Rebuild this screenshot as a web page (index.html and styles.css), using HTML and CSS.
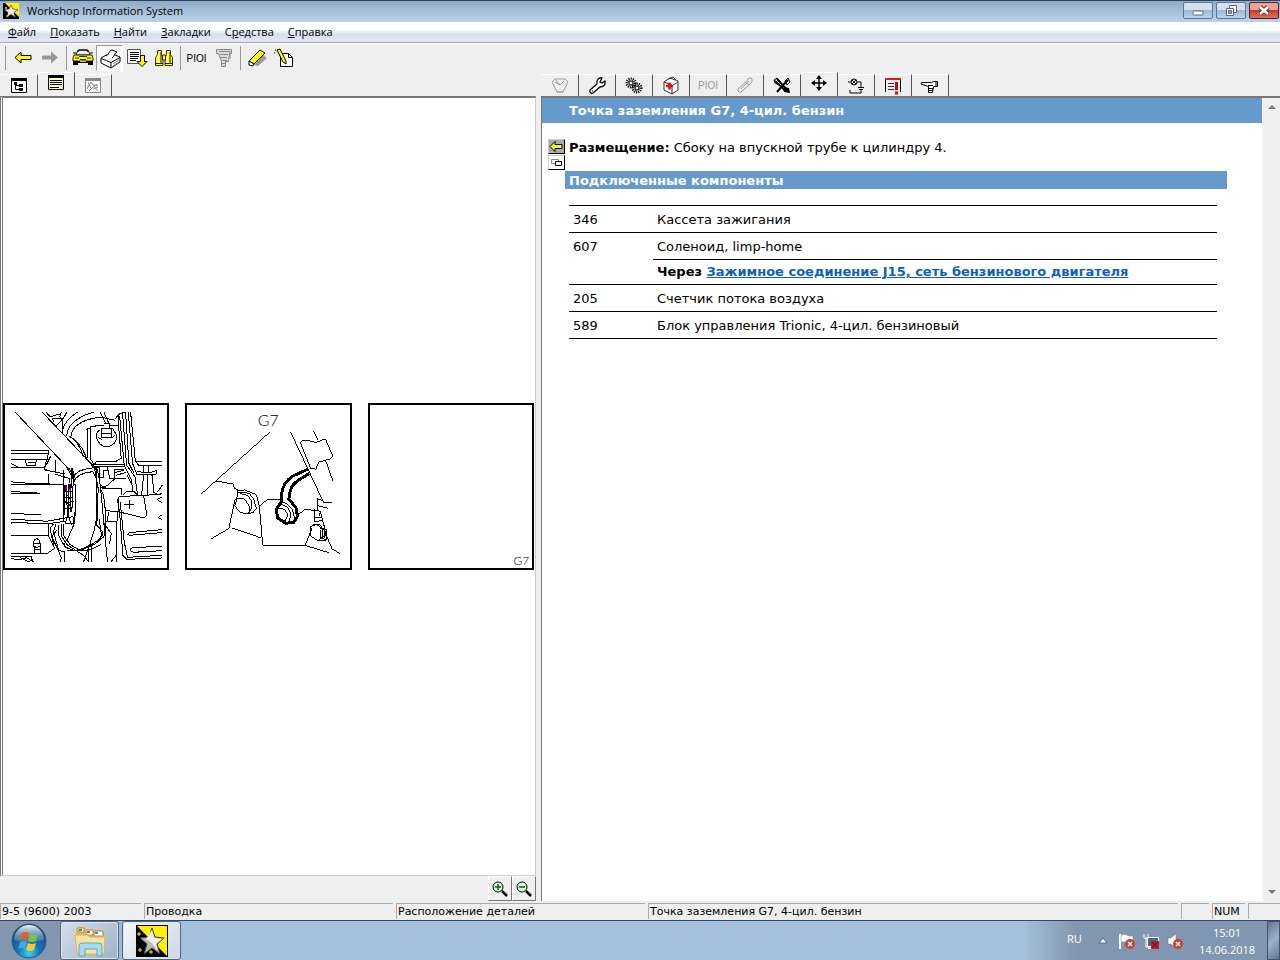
FILE: index.html
```html
<!DOCTYPE html>
<html lang="ru">
<head>
  <meta charset="UTF-8">
  <meta name="viewport" content="width=device-width, initial-scale=1.0">
  <title>Workshop Information System</title>
  <link rel="stylesheet" href="styles.css">
</head>
<body>
  <!-- Window title -->
  <header class="titlebar">
    <svg class="app-icon" viewBox="0 0 16 16"><path d="M0 0h16v16H0z"/><path d="M2 0h14v14z" fill="#fff200"/><path d="M8 2l2 4 5 .5-4 3 1.500 5-4.500-3-4.500 3 1.500-5-4-3 5-.5z" fill="#eee" stroke="#222" stroke-width=".6"/><path d="M2 5h2M3 4v2M3 13h2" stroke="#fff200"/></svg>
    <h1 class="window-title">Workshop Information System</h1>
    <div class="window-buttons">
      <button class="window-button" aria-label="Свернуть"><svg viewBox="0 0 28 15"><rect x="9" y="8" width="10" height="4" rx="1" fill="#fff" stroke="#56677d"/></svg></button>
      <button class="window-button" aria-label="Восстановить"><svg viewBox="0 0 28 15"><path d="M12.500 2.500h7v7h-7z" fill="#fff" stroke="#56677d"/><path d="M9.500 5.500h7v7h-7z" fill="#fff" stroke="#56677d"/><path d="M11.500 7.500h3v3h-3z" fill="#9db7d2" stroke="#56677d"/></svg></button>
      <button class="window-button close" aria-label="Закрыть"><svg viewBox="0 0 28 15"><path d="M10 4l8 7M18 4l-8 7" stroke="#5b3038" stroke-width="4.500"/><path d="M10 4l8 7M18 4l-8 7" stroke="#fff" stroke-width="2.600"/></svg></button>
    </div>
  </header>

  <!-- Menu -->
  <nav class="menubar">
    <button class="menu-item"><u>Ф</u>айл</button>
    <button class="menu-item"><u>П</u>оказать</button>
    <button class="menu-item"><u>Н</u>айти</button>
    <button class="menu-item"><u>З</u>акладки</button>
    <button class="menu-item">С<u>р</u>едства</button>
    <button class="menu-item"><u>С</u>правка</button>
  </nav>

  <!-- Toolbar -->
  <div class="toolbar">
    <button class="tool" aria-label="Назад"><svg viewBox="0 0 24 24"><path d="M4 11.500l6-5.500v3.500h10v4H10V17z" fill="#ff0" stroke="#000"/></svg></button>
    <button class="tool" aria-label="Вперёд"><svg viewBox="0 0 24 24"><path d="M20 11.500l-7-6v4H4v4h9v4z" fill="#999"/></svg></button>
    <span class="separator"></span>
    <button class="tool" aria-label="Автомобиль"><svg viewBox="0 0 24 24"><path d="M5 9l2-5h10l2 5z" fill="#efefef" stroke="#222"/><path d="M7 6l1-2h8l1 2M2 7h3M19 7h3" stroke="#000" fill="none"/><path d="M3 9h18l1 3v3H2v-3z" fill="#ff0" stroke="#222"/><path d="M2 15h20v4h-5v-2H7v2H2z"/><path d="M4 12h4M16 12h4M8 10.500h8M9 13.500h6" stroke="#222"/><path d="M9 15.500h6" stroke="#cc3"/></svg></button>
    <button class="tool pressed" aria-label="Печать"><svg viewBox="0 0 24 24"><path d="M3 12l9-5 10 4v5l-9 6-10-5z" fill="#fff" stroke="#000"/><path d="M3 12.500l10 4 9-5M13 16.500v5" fill="none" stroke="#000"/><path d="M8 10c3-1 3-6 6-6l5 2c-3 1-2 4-5 6" fill="#fff" stroke="#000"/><path d="M15 20l6-4M15 18l6-4M6 13l4 2" stroke="#888"/></svg></button>
    <button class="tool" aria-label="Список"><svg viewBox="0 0 24 24"><path d="M2.500 3.500h13v14h-13z" fill="#fff" stroke="#555"/><path d="M5 6.500h9M5 8.500h9M5 10.500h9M5 12.500h8M5 14.500h6" stroke="#000"/><path d="M15.500 9.500h4v6h2.500l-5 5-5-5h3.500z" fill="#ff0" stroke="#000"/></svg></button>
    <button class="tool" aria-label="Поиск"><svg viewBox="0 0 24 24"><path d="M5.500 4.500h4v4l1.500 3v8H3.500v-8l2-3zM14.500 4.500h4v4l2 3v8H13v-8l1.500-3z" fill="#ff0" stroke="#333"/><path d="M10.500 9h3v5h-3z" fill="#ff0" stroke="#222"/><path d="M3 17.500h8M13 17.500h8M9 6v12M18 6v12" stroke="#222"/><path d="M6.500 8v9M15.500 8v9" stroke="#fff"/></svg></button>
    <span class="separator"></span>
    <button class="tool code">PIOI</button>
    <button class="tool" aria-label="Разъём"><svg viewBox="0 0 24 24"><path d="M4.500 3.500h15v4h-2l-1 8h-3v5h-4v-5l-3-8h-2z" fill="#ddd" stroke="#888"/><path d="M7 5.500h11v7M8 8.500h8M8 11.500h7M9 14.500h6M10 17.500h4" fill="none" stroke="#888"/></svg></button>
    <span class="separator"></span>
    <button class="tool" aria-label="Руководство"><svg viewBox="0 0 24 24"><path d="M18 9l4 3-9 8-4-1z" fill="#999"/><path d="M4 15L15 4l5 3L9 18z" fill="#ff0" stroke="#000"/><path d="M4 15v4l4 1 1-2z" fill="#fff" stroke="#000"/></svg></button>
    <button class="tool" aria-label="Заметки"><svg viewBox="0 0 24 24"><path d="M8.500 7.500h8l4 4v9h-12z" fill="#fff" stroke="#000"/><path d="M16.500 7.500v4h4" fill="none" stroke="#000"/><path d="M5 4l3-1 6 12v3l-3-2z" fill="#ff0" stroke="#000"/><path d="M2 7h1M3 4h1" stroke="#000"/></svg></button>
  </div>

  <main class="workspace">
    <!-- Left pane: location drawings -->
    <section class="pane pane-left">
      <div class="tabs" role="tablist">
        <button class="tab" role="tab" aria-label="Дерево"><svg viewBox="0 0 24 24"><path d="M4.500 4.500h15v14h-15z" fill="#fff" stroke="#000"/><path d="M4 5.500h16" stroke="#000" stroke-width="3"/><path d="M7 8h3v3H7zM12 10h4v3h-4zM12 14h4v3h-4z"/><path d="M8.500 10v5.500H13M8.500 11.500H13" fill="none" stroke="#000"/></svg></button>
        <button class="tab active" role="tab" aria-selected="true" aria-label="Текст"><svg viewBox="0 0 24 24"><path d="M4.500 5.500h15v13h-15z" fill="#ffc" stroke="#000"/><path d="M4 5.500h16" stroke="#000" stroke-width="3"/><path d="M6 9.500h12M6 11.500h12M6 13.500h12M6 16.500h9" stroke="#000"/></svg></button>
        <button class="tab" role="tab" aria-label="Схема"><svg viewBox="0 0 24 24"><path d="M4.500 4.500h15v14h-15z" fill="#fff" stroke="#888"/><path d="M4 5.500h16" stroke="#888" stroke-width="3"/><path d="M6 15l2-4 2-3 3 4 4 5M8 17l3-3 5-4M13 11l4 1M12 15l5-2M7 8l3 6" fill="none" stroke="#888"/></svg></button>
      </div>

      <div class="figures">
        <figure class="figure">
          <svg viewBox="15 30 486 489" role="img" aria-label="Моторный отсек">
            <g class="thin">
              <path d="M45 51L198 213L216 245M126 51L275 208L288 225M138 51L150 66M158 72L162 82M150 66L178 57M155 69L190 72M183 52L179 64L187 78L186 115"/>
              <path d="M168 92L190 70L200 51M186 112Q190 78 232 51M200 122Q202 75 280 51M212 126Q215 78 300 66L345 76M205 122Q235 136 250 185M220 130L245 158L260 190"/>
              <path d="M300 51L316 85M311 51L326 85M310 85H328V98M272 94L310 91M328 90L355 92L363 190L348 198H290L282 208L270 190L272 94M272 100H263V188M263 104H259"/>
              <path d="M300 104Q286 112 289 130Q300 156 322 155Q350 150 349 120L337 100H305V126H334V103M305 115H334M294 128L305 133M334 130L344 120"/>
              <path d="M276 208H372M280 214H370M290 216V250M299 218V246H311V226H321M321 216L329 250H343V224H370M343 232L370 226M348 240L378 232"/>
              <path d="M345 72L355 58L374 51M355 58V90M358 62L372 210L392 250L398 288M367 54L379 210L404 245L412 300M376 51L386 205L400 232M384 51L397 205L410 238H468M391 51L405 195L415 211H486M405 199H486M430 211V233M446 211V233M410 229L430 232L450 233L468 226V238"/>
              <path d="M430 240L424 300M443 240L441 300M455 240L461 292L476 300M380 240L398 276M367 300L380 288H400L412 300M472 290L486 270"/>
              <path d="M33 167H144V180M33 175H144M33 192H144M144 180L132 222M152 183L132 222L158 230M33 205L55 217M33 217H132M75 194L80 210L105 212L110 194M84 202H105M165 196V233M132 224L193 236M144 236V265M163 236L207 250V265M33 260L80 264L190 268M33 268H190V376"/>
              <path d="M33 289L120 294M33 294H120M33 355L122 358M33 372L140 378L220 364M33 381L140 386L195 378M33 421H145V386M33 380V385"/>
              <path d="M198 213L214 230V268M205 218L220 240V266L226 270M190 226V266M216 250Q232 220 275 220M220 262Q232 232 278 230M226 268V350L222 386L205 425L191 450M278 230L288 250L289 370L282 405L268 450L250 500"/>
              <path d="M283 218L294 280L290 390L308 410L300 430Q250 470 200 466M292 224L300 270L308 350L315 430L322 500M300 280L310 300L316 350V430M297 370L302 410L310 425L285 446L240 466L210 448L190 420V385M183 385V420L200 448L250 480L266 500M175 388V420L194 454Q240 482 303 448M266 450V500M274 450V500"/>
              <path d="M193 270V360M198 270L202 360M206 268V358M213 265L211 350M219 264L215 350M194 290H218M194 306H215M195 323L222 318M195 341H212M205 350L196 385L220 386L223 350M202 354L214 390M198 295L212 316M196 318L210 331"/>
              <path d="M160 386L150 400L163 460L140 475H33M168 385L160 410L176 465L194 470V500M170 405L155 425L170 455L184 488L180 500M145 421L158 448M33 483H93L98 500M33 490L60 493L80 487L100 500M60 487L88 500M110 430Q98 434 100 452L110 457L120 452Q122 434 110 430M100 444H120M104 456V474M120 453V474M102 462H120M104 474H120"/>
              <path d="M304 280H365V300M300 280L322 270L345 250L377 250M299 270L320 280M318 346L352 350V376M326 352L320 378H350M350 376V500M348 480L332 500M310 382L333 415L328 446"/>
              <path d="M356 304L440 300L486 296M351 311L358 350L368 480L380 492L486 488M360 320L372 440L382 486L486 480M356 304V350L430 368L440 360L430 302M486 306Q460 312 486 322M486 360Q465 366 486 373M486 403L390 412Q374 418 390 420L486 412M486 454L400 456Q380 464 400 471L486 466"/>
              <path d="M370 328H402M387 315V342"/>
            </g>
            <path class="bold" d="M198 270V286M211 266V282M215 218L221 248M275 208L292 225M275 215H298"/>
            <path d="M198 271V289M210 278V288" stroke="#806" stroke-width="4"/>
          </svg>
        </figure>

        <figure class="figure">
          <svg viewBox="21 30 489 489" role="img" aria-label="Точка заземления G7">
            <text class="drawing-label" x="234" y="93">G7</text>
            <g class="thin">
              <path d="M270 112L63 299M108 259L160 268L164 280L174 286V304L165 318L147 402L94 433M156 400L243 430M174 287L195 286L230 300M174 292L208 296L222 314L230 342L220 354L200 358M181 297L203 302L216 320L214 344L204 357M230 300L239 334L249 452L377 453L398 400M239 334L262 316H300M333 111L433 325H458M427 317L413 312V350M413 333L446 341"/>
              <path d="M172 313H194L210 336V352L200 358L180 352L165 334Z"/>
              <path d="M365 150Q358 138 378 136L408 143L438 132L460 184L450 193L418 202L409 223L394 222Z" fill="#fff"/>
              <path d="M403 109L414 134M438 196L461 260M357 360L376 344L423 350L440 422L458 463L483 479M377 453L449 475M404 342V380M423 350L420 365M404 368L428 370M404 380L430 379L438 408M400 390H423L435 406V430"/>
              <path d="M301 321L320 326L338 344L345 370M302 327L326 339L334 360L328 382M296 340L315 344L325 361L318 378L300 374L292 358Z"/>
              <path d="M394 396L410 390L430 402V430L415 438L394 426ZM422 402L440 404V438L415 438M423 407V430L440 436M424 431L440 422"/>
            </g>
            <path class="cable" d="M384 224L340 244Q309 265 306 298V321L290 344L294 370L318 386L342 384L354 365L349 339L328 313Q330 274 352 260L389 236"/>
          </svg>
        </figure>

        <figure class="figure">
          <svg viewBox="30 30 489 489" role="img" aria-label="G7">
            <text class="drawing-label small" x="462" y="511">G7</text>
          </svg>
        </figure>
      </div>

      <div class="zoom-bar">
        <button class="zoom-button" aria-label="Увеличить"><svg viewBox="0 0 20 20"><circle cx="8" cy="8" r="5" fill="#dfd" stroke="#000"/><path d="M5 8h6M8 5v6" stroke="#060" stroke-width="1.500"/><path d="M12 12l5 5" stroke="#000" stroke-width="2.500"/></svg></button>
        <button class="zoom-button" aria-label="Уменьшить"><svg viewBox="0 0 20 20"><circle cx="8" cy="8" r="5" fill="#dfd" stroke="#000"/><path d="M5 8h6" stroke="#060" stroke-width="1.500"/><path d="M12 12l5 5" stroke="#000" stroke-width="2.500"/></svg></button>
      </div>
    </section>

    <!-- Right pane: description -->
    <section class="pane pane-right">
      <div class="tabs" role="tablist">
        <button class="tab" role="tab" aria-label="Технические данные"><svg viewBox="0 0 24 24"><path d="M7 5h10l3 3-5 10H9L4 8zM7 8l5 3 4-4M8 6l4 5M9 18h6" fill="none" stroke="#999"/></svg></button>
        <button class="tab" role="tab" aria-label="Ремонт"><svg viewBox="0 0 24 24"><path d="M5 16l7-6c-1-4 2-7 5-6l-2 4 2 1 3-2c1 4-2 6-5 6l-7 6c-2 1-4-1-3-3z" fill="#fff" stroke="#000" stroke-width="1.300"/><path d="M7 17h1" stroke="#000"/></svg></button>
        <button class="tab" role="tab" aria-label="Узлы"><svg viewBox="0 0 24 24"><circle cx="9" cy="9" r="4" fill="none" stroke="#000" stroke-width="3" stroke-dasharray="1 1"/><circle cx="15" cy="14" r="4" fill="none" stroke="#000" stroke-width="3" stroke-dasharray="1 1"/><circle cx="9" cy="9" r="2" fill="none" stroke="#000"/><circle cx="15" cy="14" r="2" fill="none" stroke="#000"/></svg></button>
        <button class="tab" role="tab" aria-label="Диагностика"><svg viewBox="0 0 24 24"><path d="M5 8l6-4 8 3v9l-6 4-8-4zM14 11l5-3M13 20v-9L5 8M9 5l5-2 3 3" fill="#fff" stroke="#333"/><path d="M7 12h7M10.500 8.500v7" stroke="#d11" stroke-width="2.500"/></svg></button>
        <button class="tab code muted" role="tab">PIOI</button>
        <button class="tab" role="tab" aria-label="Измерения"><svg viewBox="0 0 24 24"><path d="M5 15l8-7 3-4q2-1 3 1t-2 5l-9 8q-2 1-3-1zM8 15l8-8M12 8l4 3" fill="#eee" stroke="#999"/></svg></button>
        <button class="tab" role="tab" aria-label="Инструменты"><svg viewBox="0 0 24 24"><path d="M6 6l10 10" stroke="#000" stroke-width="4"/><path d="M6 6l10 10" stroke="#fff"/><path d="M18 6l-5 5-6 7" stroke="#000" stroke-width="2" fill="none"/><path d="M13 13l6 1 1 5-6-1z"/><path d="M4 6l3-2 4 4-2 3-4-2zM15 7l3-3 2 4-3 3z" fill="none" stroke="#000"/></svg></button>
        <button class="tab active" role="tab" aria-selected="true" aria-label="Расположение"><svg viewBox="0 0 24 24"><path d="M12 6v12M6 12h12" stroke="#000" stroke-width="1.500"/><path d="M12 4l3 4H9zM12 20l3-4H9zM4 12l4-3v6zM20 12l-4-3v6z"/></svg></button>
        <button class="tab" role="tab" aria-label="Электросхема"><svg viewBox="0 0 24 24"><circle cx="10" cy="8" r="3" fill="none" stroke="#000"/><path d="M8 6l4 4M12 6l-4 4M4 8h3M13 8h4v5M14 13.500h6M15 15.500h4M17 16v3H6v-3" fill="none" stroke="#000"/></svg></button>
        <button class="tab" role="tab" aria-label="Бюллетени"><svg viewBox="0 0 24 24"><path d="M4.500 18V5.500h15V18" fill="none" stroke="#000"/><path d="M4 5h16" stroke="#c22" stroke-width="2"/><path d="M7 9.500h6M7 12.500h6M7 15.500h6" stroke="#333"/><path d="M15.500 8v8M15.500 17.500v3" stroke="#d00" stroke-width="3"/></svg></button>
        <button class="tab" role="tab" aria-label="Указатель"><svg viewBox="0 0 24 24"><path d="M3.500 8.500h10l2-1h4v5h-4l-1 6h-4v-6L3 10z" fill="#fff" stroke="#000"/><path d="M10 11.500h5M11 14.500h4M11 16.500h4M18 8v4" stroke="#000"/></svg></button>
      </div>

      <div class="document-frame">
        <article class="document">
          <h2 class="document-title">Точка заземления G7, 4-цил. бензин</h2>
          <div class="location">
            <div class="location-buttons">
              <button class="mini-button back" aria-label="Назад к рисунку"><svg viewBox="0 0 15 13"><path d="M1 6.500L6 1.500v3h7v4H6v3z" fill="#ff0" stroke="#000"/></svg></button>
              <button class="mini-button" aria-label="Показать рисунок"><svg viewBox="0 0 15 13"><path d="M2.500 3.500h7v4h-7z" fill="#fff" stroke="#888"/><path d="M6.500 5.500h6v4h-6z" fill="#fff" stroke="#000"/></svg></button>
            </div>
            <p class="location-text"><b>Размещение:</b> Сбоку на впускной трубе к цилиндру 4.</p>
          </div>
          <h3 class="section-title">Подключенные компоненты</h3>
          <table class="components">
            <tr><td class="number">346</td><td>Кассета зажигания</td></tr>
            <tr><td class="number" rowspan="2">607</td><td>Соленоид, limp-home</td></tr>
            <tr class="via"><td><b>Через <a href="#j15">Зажимное соединение J15, сеть бензинового двигателя</a></b></td></tr>
            <tr><td class="number">205</td><td>Счетчик потока воздуха</td></tr>
            <tr><td class="number">589</td><td>Блок управления Trionic, 4-цил. бензиновый</td></tr>
          </table>
        </article>
        <div class="scrollbar">
          <button class="scroll-arrow up" aria-label="Вверх"></button>
          <button class="scroll-arrow down" aria-label="Вниз"></button>
        </div>
      </div>
    </section>
  </main>

  <!-- Status bar -->
  <div class="statusbar">
    <span class="status">9-5 (9600) 2003</span>
    <span class="status">Проводка</span>
    <span class="status">Расположение деталей</span>
    <span class="status">Точка заземления G7, 4-цил. бензин</span>
    <span class="status"></span>
    <span class="status">NUM</span>
    <span class="status"></span>
  </div>

  <!-- Windows taskbar -->
  <footer class="taskbar">
    <button class="start" aria-label="Пуск">
      <svg viewBox="0 0 36 36">
        <defs>
          <radialGradient id="orb" cx="50%" cy="85%" r="80%"><stop offset="0" stop-color="#35d5f5"/><stop offset=".4" stop-color="#1674b5"/><stop offset="1" stop-color="#164576"/></radialGradient>
          <linearGradient id="shine" x2="0" y2="1"><stop offset="0" stop-color="#e8f1f7"/><stop offset="1" stop-color="#7aa6c8" stop-opacity=".3"/></linearGradient>
        </defs>
        <circle cx="18" cy="18" r="17" fill="url(#orb)" stroke="#355574"/>
        <path d="M3 17a15 15 0 0 1 30 0q-15 4-30 0z" fill="url(#shine)"/>
        <path d="M11 10q4-2 7 0l-2 7q-4-2-7 0z" fill="#ee5a24"/>
        <path d="M19 11q4 2 8 0l-2 7q-4 2-8 0z" fill="#7fc23c"/>
        <path d="M9 19q4-2 7 0l-2 7q-4-2-7 0z" fill="#45a5e8"/>
        <path d="M17 20q4 2 8 0l-2 7q-4 2-8 0z" fill="#fdc82e"/>
      </svg>
    </button>
    <button class="task" aria-label="Проводник">
      <svg viewBox="0 0 34 34"><path d="M3 5q0-2 2-2h7l2 3h17v23q0 2-2 2H5q-2 0-2-2z" fill="#e3ba62"/><path d="M5 4h6v4H5zM13 6h7v5h-7zM21 7h9v5h-9z" fill="#fff" stroke="#b38c45"/><path d="M6 5h3v2H6z" fill="#2a9c49"/><path d="M14 7h3v2h-3z" fill="#d34b35"/><path d="M22 8h3v2h-3z" fill="#378bd0"/><path d="M2 11h12l3 2h15l-1 17H4z" fill="#f9e3a0" stroke="#dab362"/><path d="M6 32V22q0-3 3-3h17q3 0 3 3v10h-5v-7H12v7z" fill="#a5dcef" stroke="#5ba8c9"/></svg>
    </button>
    <button class="task current" aria-label="Workshop Information System">
      <svg viewBox="0 0 34 34"><path d="M1 1h32v32H1z"/><path d="M2 2h30v30z" fill="#fff200"/><path d="M17 4l3 9 9 1-7 6 3 10-8-6-8 6 3-10-7-6 9-1z" fill="#bbb" stroke="#444"/><path d="M17 6l2 8 8 1-6 5 2 7-6-8-6-4z" fill="#f0f0f0"/><path d="M2 10h4M4 8v4M3 26h4M5 24v4M14 28h4M16 26v4" stroke="#fff200"/></svg>
    </button>
    <div class="tray">
      <span class="language">RU</span>
      <button class="tray-button" aria-label="Скрытые значки"><svg viewBox="0 0 18 18"><path d="M5 11l4-5 4 5z" fill="#fff" stroke="#566b86"/></svg></button>
      <button class="tray-button" aria-label="Центр поддержки"><svg viewBox="0 0 18 18"><path d="M2 2v15" stroke="#fff" stroke-width="2"/><path d="M3 3q4-2 8 1h4v7q-4 1-7-1H3z" fill="#fff" stroke="#777" stroke-width=".5"/><circle cx="12" cy="12" r="5" fill="#d33a32"/><path d="M10 10l4 4M14 10l-4 4" stroke="#fff" stroke-width="1.500"/></svg></button>
      <button class="tray-button" aria-label="Сеть"><svg viewBox="0 0 18 18"><path d="M5.500 5.500h11v9h-11z" fill="#53657e" stroke="#fff"/><path d="M2 2v4h4V2M4 6v9h5M6 16.500h8" fill="none" stroke="#fff"/><path d="M9 9h8v8H9z" fill="#b9232c"/><path d="M10 10l6 6M16 10l-6 6" stroke="#7c1720" stroke-width="1.500"/></svg></button>
      <button class="tray-button" aria-label="Громкость"><svg viewBox="0 0 18 18"><path d="M2 6h3l5-4v14l-5-4H2z" fill="#fff" stroke="#777" stroke-width=".5"/><circle cx="12" cy="12" r="5" fill="#d33a32"/><path d="M10 10l4 4M14 10l-4 4" stroke="#fff" stroke-width="1.500"/></svg></button>
      <time class="clock" datetime="2018-06-14T15:01"><span>15:01</span><span>14.06.2018</span></time>
      <button class="show-desktop" aria-label="Свернуть все окна"></button>
    </div>
  </footer>
</body>
</html>
```
FILE: styles.css
```css
* {
  box-sizing: border-box;
}
body {
  display: flex;
  flex-direction: column;
  min-height: 100vh;
  margin: 0;
  background-color: #efefef;
  color: #000;
  font-family: "Open Sans", "Noto Sans", sans-serif;
  font-size: 11px;
}
button {
  margin: 0;
  padding: 0;
  border: 0;
  background: none;
  color: inherit;
  font: inherit;
}
svg {
  display: block;
  flex: none;
}
/* Title bar */
.titlebar {
  display: flex;
  align-items: center;
  height: 22px;
  padding: 0 1px 2px 3px;
  border-top: 1px solid #2c4058;
  background: linear-gradient(#93abc8, #bcd2ea);
}
.app-icon {
  width: 16px;
  height: 16px;
}
.window-title {
  flex: 1;
  margin: 0 0 0 8px;
  font-size: 11px;
  line-height: 18px;
  font-weight: normal;
}
.window-buttons {
  display: flex;
  gap: 3px;
}
.window-button {
  width: 30px;
  height: 17px;
  border: 1px solid #5c7592;
  border-radius: 2px;
  background: linear-gradient(#d2e0f0 45%, #9db7d4 50%, #bdd4ed);
}
.window-button.close {
  border-color: #551d25;
  background: linear-gradient(#e6a396 45%, #c63b27 50%, #d97463);
}
/* Menu */
.menubar {
  display: flex;
  gap: 14px;
  height: 21px;
  padding: 0 8px;
  border-bottom: 1px solid #a8a8b0;
  background: linear-gradient(#fcfdff 40%, #d9deef 60%, #e2e5f4);
}
.menu-item {
  line-height: 18px;
}
/* Toolbar */
.toolbar {
  display: flex;
  align-items: center;
  height: 29px;
  padding-left: 5px;
  border-top: 1px solid #fff;
}
.toolbar::before {
  content: "";
  height: 24px;
  margin-right: 3px;
  border-left: 1px solid #999;
}
.tool {
  display: flex;
  align-items: center;
  justify-content: center;
  width: 27px;
  height: 26px;
}
.tool svg {
  width: 24px;
  height: 24px;
}
.tool.pressed {
  border: 1px solid;
  border-color: #999 #fff #fff #999;
  background-color: #f7f7f7;
}
.separator {
  width: 1px;
  height: 24px;
  margin: 0 2px 0 3px;
  background-color: #999;
}
.code {
  font-family: "Liberation Sans", Arial, sans-serif;
  font-size: 10px;
}
.muted {
  color: #999;
}
/* Two panes with a splitter between them */
.workspace {
  flex: 1;
  display: grid;
  grid-template-columns: 67fr 93fr;
}
.pane {
  display: flex;
  flex-direction: column;
  min-width: 0;
}
.pane-right {
  padding-left: 5px;
}
/* Tabs */
.tabs {
  display: flex;
  align-items: flex-end;
  height: 24px;
  padding-left: 1px;
}
.tab {
  display: flex;
  align-items: center;
  justify-content: center;
  width: 37px;
  height: 22px;
  border-top: 1px solid #fff;
  border-right: 1px solid #555;
}
.tab svg {
  width: 24px;
  height: 24px;
}
.tab.active {
  height: 24px;
  padding-bottom: 4px;
}
/* Drawings */
.figures {
  flex: 1;
  display: grid;
  grid-template-columns: repeat(3, 1fr);
  align-items: center;
  gap: 16px;
  padding-right: 1px;
  border: 1px solid #ccc;
  border-top: 2px solid #777;
  border-left: 3px double #777;
  background-color: #fff;
}
.figure {
  margin: 0;
  border: 2px solid #000;
}
.figure svg {
  width: 100%;
}
.thin,
.bold,
.cable {
  fill: none;
  stroke: #000;
  stroke-width: 3;
  shape-rendering: crispEdges;
}
.bold {
  stroke-width: 6;
}
.cable {
  stroke-width: 9;
}
.drawing-label {
  font-family: Lato, "Liberation Sans", sans-serif;
  font-size: 48px;
  font-weight: 300;
}
.drawing-label.small {
  font-size: 36px;
}
.zoom-bar {
  display: flex;
  justify-content: flex-end;
  height: 25px;
}
.zoom-button {
  display: flex;
  align-items: center;
  justify-content: center;
  width: 24px;
  height: 25px;
  border: 1px solid;
  border-color: #fff #777 #777 #fff;
}
.zoom-button svg {
  width: 20px;
  height: 20px;
}
/* Document */
.document-frame {
  flex: 1;
  display: flex;
  border-top: 2px solid #777;
  border-left: 1px solid #777;
}
.document {
  flex: 1;
  background-color: #fff;
  font-family: "DejaVu Sans", Verdana, sans-serif;
  font-size: 13px;
  line-height: 18px;
}
.document-title,
.section-title {
  margin: 0;
  background-color: #69c;
  color: #fff;
  font-size: 13px;
}
.document-title {
  padding: 4px 27px 3px;
}
.location {
  display: flex;
  align-items: flex-start;
  gap: 4px;
  padding: 16px 6px 0;
}
.location-buttons {
  display: grid;
  gap: 1px;
}
.mini-button {
  width: 17px;
  height: 15px;
  border: 1px solid;
  border-color: #ccc #000 #000 #ccc;
}
.mini-button.back {
  background-color: #aaa;
}
.mini-button svg {
  width: 15px;
  height: 13px;
}
.location-text {
  margin: 0;
}
.section-title {
  margin: 1px 35px 16px 23px;
  padding: 1px 4px 0;
  line-height: 17px;
}
.components {
  width: calc(100% - 72px);
  margin-left: 27px;
  border-collapse: collapse;
  border-bottom: 1px solid #000;
}
.components td {
  height: 27px;
  padding: 5px 4px 3px;
  border-top: 1px solid #000;
  vertical-align: top;
}
.components .via td {
  height: 25px;
  padding: 3px 4px;
}
.components .number {
  width: 84px;
}
.components a {
  color: #0f5fbd;
}
/* Scroll bar */
.scrollbar {
  display: flex;
  flex-direction: column;
  justify-content: space-between;
  width: 18px;
  border-left: 1px solid #f8f8f8;
}
.scroll-arrow {
  height: 18px;
}
.scroll-arrow::before {
  content: "";
  display: block;
  width: 0;
  margin: 0 auto;
  border: 4px solid transparent;
}
.scroll-arrow.up::before {
  border-top: 0;
  border-bottom-color: #777;
}
.scroll-arrow.down::before {
  border-bottom: 0;
  border-top-color: #777;
}
/* Status bar */
.statusbar {
  display: grid;
  grid-template-columns: 141fr 249fr 249fr 530fr 28px 33px 32px;
  gap: 3px;
  padding: 2px 0 1px;
  font-family: "DejaVu Sans", Verdana, sans-serif;
  font-size: 11px;
  line-height: 16px;
}
.status {
  height: 16px;
  padding-left: 1px;
  border-top: 1px solid #aaa;
  border-left: 1px solid #aaa;
  white-space: nowrap;
}
/* Taskbar */
.taskbar {
  display: flex;
  height: 40px;
  border-top: 1px solid #33485f;
  background: linear-gradient(90deg, #8397b0 60px, #a5c0dc 130px, #a5c0dc 80%, #8196b1 84%);
  color: #fff;
}
.start {
  display: flex;
  align-items: center;
  justify-content: center;
  width: 57px;
}
.start svg {
  width: 36px;
  height: 36px;
}
.task {
  display: flex;
  align-items: center;
  justify-content: center;
  width: 59px;
  margin-left: 3px;
  border: 1px solid #50657f;
  border-radius: 3px;
  background: linear-gradient(135deg, #d5dfe9, #9db2c9);
  box-shadow: inset 0 0 0 1px #dce6f0;
}
.task.current {
  background: linear-gradient(135deg, #f3f6fa, #cbd9e8);
}
.task svg {
  width: 34px;
  height: 34px;
}
.tray {
  display: flex;
  align-items: center;
  margin-left: auto;
}
.language {
  width: 24px;
  padding-bottom: 4px;
}
.tray-button {
  width: 24px;
}
.tray-button svg {
  width: 18px;
  height: 18px;
  margin: 0 auto;
}
.clock {
  display: grid;
  width: 80px;
  line-height: 17px;
  text-align: center;
}
.show-desktop {
  align-self: stretch;
  width: 13px;
  border: 1px solid #40546e;
  background: linear-gradient(135deg, #62758e, #9eb0c5 50%, #62758e);
}
```
